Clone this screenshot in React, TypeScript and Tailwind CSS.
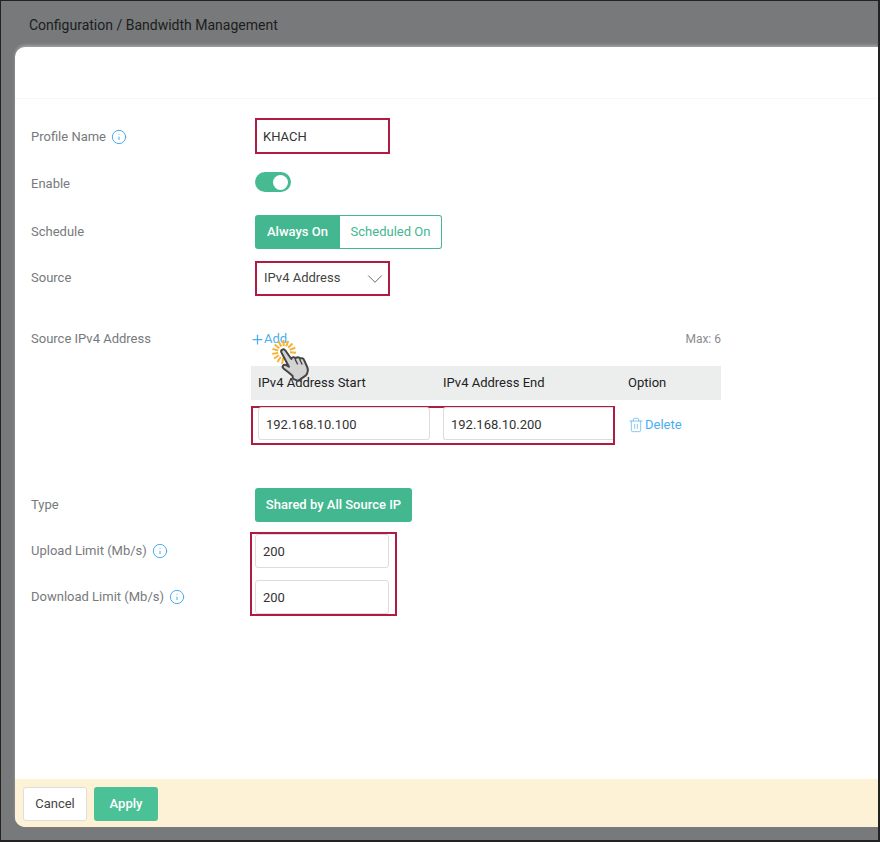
import { ChevronDown, Info, Plus, Trash2 } from "lucide-react";

const font = { fontFamily: "Roboto, sans-serif" };

function Label({ text, info, className }: { text: string; info?: boolean; className?: string }) {
  return (
    <div className={`w-[224px] shrink-0 flex items-center gap-[5px] text-[13px] text-[#777a7c] ${className ?? ""}`}>
      <span>{text}</span>
      {info && <Info size={16} strokeWidth={1.4} className="text-[#3ea6ec]" />}
    </div>
  );
}

function ClickHand() {
  const rays = [];
  for (let i = 0; i < 13; i++) {
    const a = 165 + i * 24;
    rays.push(
      <line key={i} x1="14" y1="7" x2="14" y2="1" stroke="#f8b133" strokeWidth="2" transform={`rotate(${a} 14 13)`} />
    );
  }
  return (
    <svg width="46" height="46" viewBox="0 0 46 46" className="absolute left-[19px] top-[9px]">
      {rays}
      <g transform="translate(11.500 13) scale(1.35 1.3) translate(-11.500 -13)">
        <path
          d="M11.500 13.500c-1-2.200 1.600-3.600 2.900-1.700l4.400 6.600c.1-1.600 2.500-2 3.200-.4.500-1.300 2.600-1.200 3.200.2.800-.9 2.500-.5 3 .8l2.300 5.400c1 2.500.4 4.800-.9 6.600l-5.800 4.200-3.700-1.600-.5-2.400c-2-1.800-4.200-3.600-6.400-5.300-2-1.600-.1-3.800 1.800-2.800l2 1.200z"
          fill="#d3d3d3"
          stroke="#454545"
          strokeWidth="1.500"
          strokeLinejoin="round"
        />
        <path d="M21.500 18.500l2 4M25 18.800l1.800 3.800" stroke="#454545" strokeWidth="1" fill="none" />
      </g>
    </svg>
  );
}

export default function App() {
  return (
    <div style={font} className="w-[880px] h-[842px] bg-[#77797a] border border-[#222] border-r-2 border-b-2 overflow-hidden flex flex-col">
      <div className="h-[46px] shrink-0 pl-[28px] pt-[15px] text-[14px] leading-[18px] text-[#1b1d1f]">
        Configuration / Bandwidth Management
      </div>
      <div className="ml-[14px] h-[780px] bg-white rounded-l-[10px] overflow-hidden flex flex-col shadow-[0_-2px_3px_rgba(255,255,255,0.3)]">
        <div className="h-[52px] shrink-0 border-b border-[#f6f6f6]" />
        <div className="flex-1 pl-[16px] pt-[19px]">
          <div className="flex h-[36px]">
            <Label text="Profile Name" info className="pt-[2px]" />
            <div className="w-[135px] h-[36px] border-2 border-[#b01c41] flex items-center pl-[6px] pt-[2px] text-[13px] text-[#333]">KHACH</div>
          </div>
          <div className="flex h-[20px] mt-[18px]">
            <Label text="Enable" className="pt-[4px]" />
            <div className="w-[36px] h-[20px] rounded-full bg-[#46bb92] flex items-center justify-end pr-[3px]">
              <div className="w-[15px] h-[15px] rounded-full bg-white" />
            </div>
          </div>
          <div className="flex h-[34px] mt-[23px]">
            <Label text="Schedule" />
            <div className="flex h-[34px] text-[13px]">
              <div className="w-[85px] bg-[#43b78f] rounded-l-[3px] flex items-center justify-center font-medium text-white">Always On</div>
              <div className="w-[102px] border border-l-0 border-[#43b78f] rounded-r-[3px] flex items-center justify-center text-[#43b78f]">Scheduled On</div>
            </div>
          </div>
          <div className="flex h-[35px] mt-[12px]">
            <Label text="Source" className="pb-[2px]" />
            <div className="w-[135px] h-[35px] border-2 border-[#b01c41] flex items-center justify-between pl-[7px] pb-[2px] text-[13px] text-[#444]">
              <span>IPv4 Address</span>
              <ChevronDown size={26} strokeWidth={0.9} className="text-[#666] mt-[3px]" />
            </div>
          </div>
          <div className="flex mt-[34px]">
            <Label text="Source IPv4 Address" className="self-start h-[18px]" />
            <div className="w-[470px] -ml-[4px] relative">
              <div className="h-[18px] flex items-center justify-between text-[12px]">
                <div className="flex items-center text-[13px] text-[#49aef0]">
                  <Plus size={15} strokeWidth={2} className="-ml-[1px] -mr-[1px]" />
                  <span>Add</span>
                </div>
                <span className="text-[#8a8d8f]">Max: 6</span>
              </div>
              <div className="mt-[18px] h-[34px] bg-[#eceeee] flex items-center text-[13px] text-[#222]">
                <span className="w-[192px] pl-[7px]">IPv4 Address Start</span>
                <span className="w-[185px]">IPv4 Address End</span>
                <span>Option</span>
              </div>
              <div className="h-[45px] flex items-center">
                <div className="w-[364px] h-[39px] mt-[6px] border-2 border-[#b01c41] flex items-start pl-[5px] text-[13px] text-[#333]">
                  <div className="w-[172px] h-[33px] -mt-[1px] border border-[#dcdcdc] rounded-[3px] flex items-center pl-[7px] pt-[2px] shrink-0">192.168.10.100</div>
                  <div className="w-[170px] h-[33px] -mt-[1px] ml-[13px] border border-r-0 border-[#dcdcdc] rounded-l-[3px] flex items-center pl-[7px] pt-[2px] shrink-0">192.168.10.200</div>
                </div>
                <div className="ml-[13px] mt-[4px] flex items-center gap-[1px] text-[13px] text-[#49aef0]">
                  <Trash2 size={16} strokeWidth={1} />
                  <span>Delete</span>
                </div>
              </div>
              <ClickHand />
            </div>
          </div>
          <div className="flex h-[34px] mt-[43px]">
            <Label text="Type" />
            <div className="w-[157px] bg-[#43b78f] rounded-[3px] flex items-center justify-center text-[13px] font-medium text-white">Shared by All Source IP</div>
          </div>
          <div className="flex mt-[10px]">
            <div className="flex flex-col">
              <div className="flex h-[33px] mt-[2px]">
                <Label text="Upload Limit (Mb/s)" info />
              </div>
              <div className="flex h-[34px] mt-[13px]">
                <Label text="Download Limit (Mb/s)" info />
              </div>
            </div>
            <div className="-ml-[5px] w-[147px] h-[84px] border-2 border-[#b01c41] pl-[3px] text-[13px] text-[#333]">
              <div className="w-[134px] h-[34px] border border-[#dcdcdc] rounded-[3px] flex items-center pl-[7px] pt-[2px]">200</div>
              <div className="w-[134px] h-[34px] mt-[12px] border border-[#dcdcdc] rounded-[3px] flex items-center pl-[7px] pt-[2px]">200</div>
            </div>
          </div>
        </div>
        <div className="h-[48px] shrink-0 bg-[#fdf2d5] flex items-center pl-[8px] pt-[2px] gap-[7px] text-[13px]">
          <div className="w-[64px] h-[34px] bg-white border border-[#dddddd] rounded-[3px] flex items-center justify-center text-[#444]">Cancel</div>
          <div className="w-[64px] h-[34px] bg-[#4ac196] rounded-[3px] flex items-center justify-center font-medium text-white">Apply</div>
        </div>
      </div>
    </div>
  );
}
